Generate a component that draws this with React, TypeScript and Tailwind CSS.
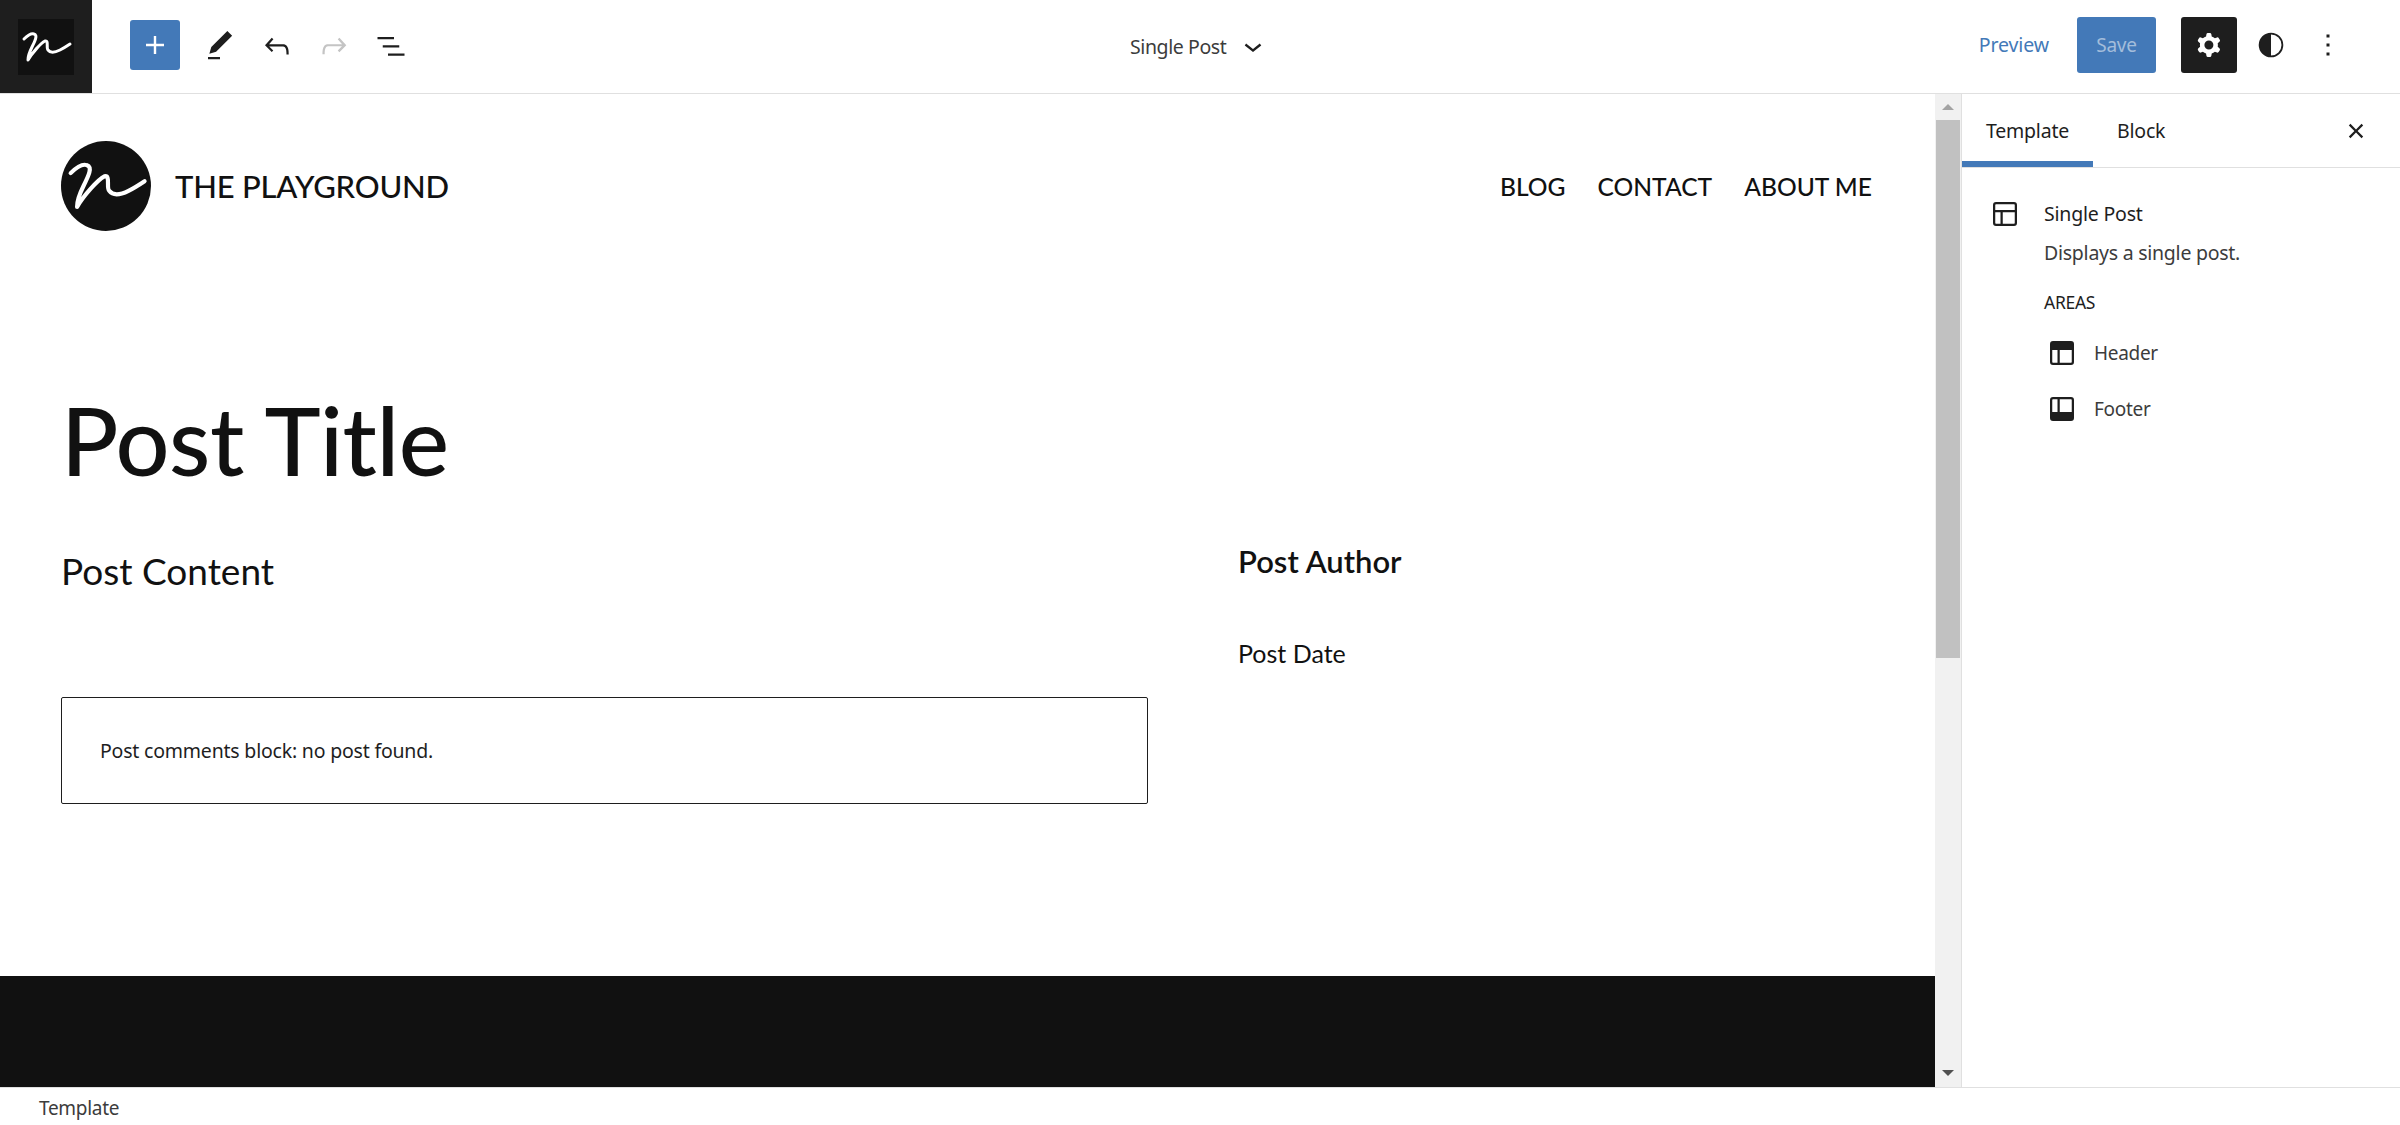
const ui = "font-['Noto_Sans',sans-serif]";
const page = "font-['Lato','Inter',sans-serif]";

function Icon({ d, className = "", size = 36, evenodd }: { d: string; className?: string; size?: number; evenodd?: boolean }) {
    return (
        <svg width={size} height={size} viewBox="0 0 24 24" fill="currentColor" className={className}>
            <path d={d} fillRule={evenodd ? "evenodd" : undefined} clipRule={evenodd ? "evenodd" : undefined} />
        </svg>
    );
}

// the hand written "n" of the site logo
function Scribble({ size, stroke = 3 }: { size: number; stroke?: number }) {
    return (
        <svg width={size} height={size} viewBox="0 0 56 56" fill="none">
            <path
                d="M6 20C9 17 13 14 16 15C20 16 17 22 14 28C12 32 10 37 10 41C14 34 23 24 27 22C31 21 28 29 30 31C33 35 38 33 42 31C46 29 49 27 52 25"
                stroke="#fff"
                strokeWidth={stroke}
                strokeLinecap="round"
                strokeLinejoin="round"
            />
        </svg>
    );
}

function TopBar() {
    return (
        <header className={`flex h-[94px] shrink-0 items-center border-b border-[#e0e0e0] bg-white ${ui}`}>
            <div className="flex h-[93px] w-[92px] shrink-0 items-center justify-center bg-[#1e1e1e]">
                <div className="flex h-14 w-14 items-center justify-center bg-[#111111]">
                    <Scribble size={56} />
                </div>
            </div>
            <div className="mb-[3px] ml-[38px] flex h-[50px] w-[50px] items-center justify-center rounded-[3px] bg-[#4379b8] text-white">
                <Icon d="M18 11.2h-5.2V6h-1.6v5.2H6v1.6h5.2V18h1.6v-5.2H18z" />
            </div>
            <div className="mb-[2px] ml-[22px] flex items-center gap-[21px] text-[#1e1e1e]">
                <Icon d="M20.1 5.1L16.9 2 6.2 12.7l-1.3 4.4 4.5-1.3L20.1 5.1zM4 20.8h8v-1.5H4v1.5z" />
                <Icon d="M18.3 11.7c-.6-.6-1.4-.9-2.3-.9H6.7l2.9-3.3-1.1-1-4.5 5L8.5 16l1-1-2.7-2.7H16c.5 0 .9.2 1.3.5 1 1 1 3.4 1 4.5v.3h1.5v-.2c0-1.5 0-4.3-1.5-5.7z" />
                <Icon className="text-[#c4c4c4]" d="M15.6 6.5l-1.1 1 2.9 3.3H8c-.9 0-1.7.3-2.3.9-1.4 1.5-1.4 4.2-1.4 5.6v.2h1.5v-.3c0-1.1 0-3.5 1-4.5.3-.3.7-.5 1.3-.5h9.2L14.5 15l1.1 1.1 4.6-4.6-4.6-5z" />
                <Icon d="M3 6h11v1.5H3V6zm3.5 5.5h11V13h-11v-1.5zM21 17H10v1.5h11V17z" />
            </div>

            <div className="ml-[721px] flex w-[150px] items-center text-[#1e1e1e]">
                <span className="text-[19.5px] tracking-[-0.4px] whitespace-nowrap text-[#3c3c3c]">Single Post</span>
                <Icon className="mb-[2px] ml-[9px] shrink-0" d="M17.5 11.6L12 16l-5.5-4.4.9-1.2L12 14l4.5-3.6 1 1.2z" />
            </div>

            <div className="mb-[3px] ml-auto flex items-center">
                <span className="text-[19.5px] tracking-[-0.1px] text-[#4379b8]">Preview</span>
                <div className="ml-[28px] flex h-14 w-[79px] items-center justify-center rounded-[3px] bg-[#4379b8] text-[19px] tracking-[-0.3px] text-[#a3bddb]">
                    Save
                </div>
                <div className="ml-[25px] flex h-14 w-14 items-center justify-center rounded-[3px] bg-[#1e1e1e] text-white">
                    <Icon
                        evenodd
                        d="M10.289 4.836A1 1 0 0111.275 4h1.306a1 1 0 01.987.836l.244 1.466c.787.26 1.503.679 2.108 1.218l1.393-.522a1 1 0 011.216.437l.653 1.13a1 1 0 01-.23 1.273l-1.148.944a6.025 6.025 0 010 2.435l1.149.946a1 1 0 01.23 1.272l-.653 1.13a1 1 0 01-1.216.437l-1.394-.522c-.605.54-1.32.958-2.108 1.218l-.244 1.466a1 1 0 01-.987.836h-1.306a1 1 0 01-.986-.836l-.244-1.466a5.995 5.995 0 01-2.108-1.218l-1.394.522a1 1 0 01-1.217-.436l-.653-1.131a1 1 0 01.23-1.272l1.149-.946a6.026 6.026 0 010-2.435l-1.148-.944a1 1 0 01-.23-1.272l.653-1.131a1 1 0 011.217-.437l1.393.522a5.994 5.994 0 012.108-1.218l.244-1.466zM14.929 12a3 3 0 11-6 0 3 3 0 016 0z"
                    />
                </div>
                <svg width="36" height="36" viewBox="0 0 24 24" className="ml-[16px] text-[#1e1e1e]">
                    <circle cx="12" cy="12" r="7.6" fill="none" stroke="currentColor" strokeWidth="1.2" />
                    <path d="M12 4.4a7.6 7.6 0 000 15.2z" fill="currentColor" />
                </svg>
                <Icon className="ml-[21px] mr-[54px] text-[#1e1e1e]" d="M13 19h-2v-2h2v2zm0-6h-2v-2h2v2zm0-6h-2V5h2v2z" />
            </div>
        </header>
    );
}

function PageCanvas() {
    return (
        <main className={`flex min-w-0 flex-1 flex-col overflow-hidden bg-white text-[#111111] ${page}`}>
            <div className="flex items-center justify-between pl-[61px] pr-[63px] pt-[47px]">
                <div className="flex items-center gap-[24px]">
                    <div className="flex h-[90px] w-[90px] items-center justify-center rounded-full bg-[#111111]">
                        <Scribble size={90} stroke={2.6} />
                    </div>
                    <span className="text-[31px] font-medium tracking-[-0.2px]">THE PLAYGROUND</span>
                </div>
                <nav className="flex gap-[32px] pt-[2px] text-[24.6px] font-medium">
                    <span>BLOG</span>
                    <span>CONTACT</span>
                    <span>ABOUT ME</span>
                </nav>
            </div>

            <h1 className="ml-[61px] mt-[148px] text-[95px] leading-[120px] font-medium tracking-[-0.5px]">Post Title</h1>

            <div className="mt-[48px] flex flex-1 pl-[61px]">
                <div className="w-[1087px] shrink-0">
                    <p className="text-[37px] leading-[48px]">Post Content</p>
                    <div className={`mt-[102px] flex h-[107px] items-center rounded-[2px] border border-[#1e1e1e] pl-[38px] text-[19.5px] tracking-[-0.2px] text-[#1e1e1e] ${ui}`}>
                        Post comments block: no post found.
                    </div>
                </div>
                <div className="ml-[90px]">
                    <p className="-mt-[6px] text-[31px] leading-[40px] font-semibold">Post Author</p>
                    <p className="mt-[56px] text-[25px] leading-[32px]">Post Date</p>
                </div>
            </div>

            <div className="h-[111px] shrink-0 bg-[#111111]" />
        </main>
    );
}

function Scrollbar() {
    return (
        <div className="flex w-[26px] shrink-0 flex-col bg-[#f1f1f1]">
            <div className="flex h-[26px] items-center justify-center">
                <div className="h-0 w-0 border-x-[6px] border-b-[6px] border-x-transparent border-b-[#a3a3a3]" />
            </div>
            <div className="ml-[1px] h-[538px] w-[24px] bg-[#c1c1c1]" />
            <div className="flex flex-1 items-end justify-center pb-[11px]">
                <div className="h-0 w-0 border-x-[6px] border-t-[6px] border-x-transparent border-t-[#505050]" />
            </div>
        </div>
    );
}

function AreaRow({ label, footer }: { label: string; footer?: boolean }) {
    return (
        <div className="flex h-[56px] items-center">
            <svg width="36" height="36" viewBox="0 0 24 24" fill="none" className="text-[#1e1e1e]">
                <rect x="4.75" y="4.75" width="14.5" height="14.5" rx="1.25" stroke="currentColor" strokeWidth="1.5" />
                {footer ? (
                    <>
                        <rect x="4.75" y="14" width="14.5" height="5.25" fill="currentColor" />
                        <path d="M9.75 4.75V14" stroke="currentColor" strokeWidth="1.5" />
                    </>
                ) : (
                    <>
                        <rect x="4.75" y="4.75" width="14.5" height="5.25" fill="currentColor" />
                        <path d="M9.75 10v9.25" stroke="currentColor" strokeWidth="1.5" />
                    </>
                )}
            </svg>
            <span className="ml-[14px] text-[19px] tracking-[-0.3px] text-[#3c3c3c]">{label}</span>
        </div>
    );
}

function Sidebar() {
    return (
        <aside className={`flex w-[439px] shrink-0 flex-col border-l border-[#e0e0e0] bg-white text-[#1e1e1e] ${ui}`}>
            <div className="flex h-[74px] shrink-0 items-stretch border-b border-[#e0e0e0] text-[19.5px] tracking-[-0.2px]">
                <div className="flex w-[131px] items-center justify-center border-b-[6px] border-[#4379b8] pt-[6px]">Template</div>
                <div className="ml-[24px] flex items-center pt-[1px]">Block</div>
                <Icon className="ml-auto mr-[26px] self-center" d="M12 13.06l3.712 3.713 1.061-1.06L13.061 12l3.712-3.712-1.06-1.06L12 10.938 8.288 7.227l-1.061 1.06L10.939 12l-3.712 3.712 1.06 1.061L12 13.061z" />
            </div>
            <div className="flex pl-[25px] pt-[28px]">
                <svg width="36" height="36" viewBox="0 0 24 24" fill="none" stroke="#1e1e1e" strokeWidth="1.5">
                    <rect x="4.75" y="4.75" width="14.5" height="14.5" rx="1.25" />
                    <path d="M4.75 10h14.5M9.75 10v9.25" />
                </svg>
                <div className="ml-[21px] flex-1">
                    <p className="text-[19.5px] leading-[36px] tracking-[-0.2px]">Single Post</p>
                    <p className="mt-[3px] text-[19.5px] leading-[36px] tracking-[-0.25px] text-[#3c3c3c]">Displays a single post.</p>
                    <p className="mt-[13px] text-[17.5px] leading-[36px] tracking-[-0.3px]">AREAS</p>
                    <div className="mt-[5px]">
                        <AreaRow label="Header" />
                        <AreaRow label="Footer" footer />
                    </div>
                </div>
            </div>
        </aside>
    );
}

export default function App() {
    return (
        <div className="flex h-[1125px] w-[2400px] flex-col overflow-hidden bg-white">
            <TopBar />
            <div className="flex min-h-0 flex-1">
                <PageCanvas />
                <Scrollbar />
                <Sidebar />
            </div>
            <footer className={`flex h-[38px] shrink-0 items-center border-t border-[#e0e0e0] bg-white pl-[39px] pt-[3px] text-[19px] tracking-[-0.3px] text-[#3c3c3c] ${ui}`}>
                Template
            </footer>
        </div>
    );
}
